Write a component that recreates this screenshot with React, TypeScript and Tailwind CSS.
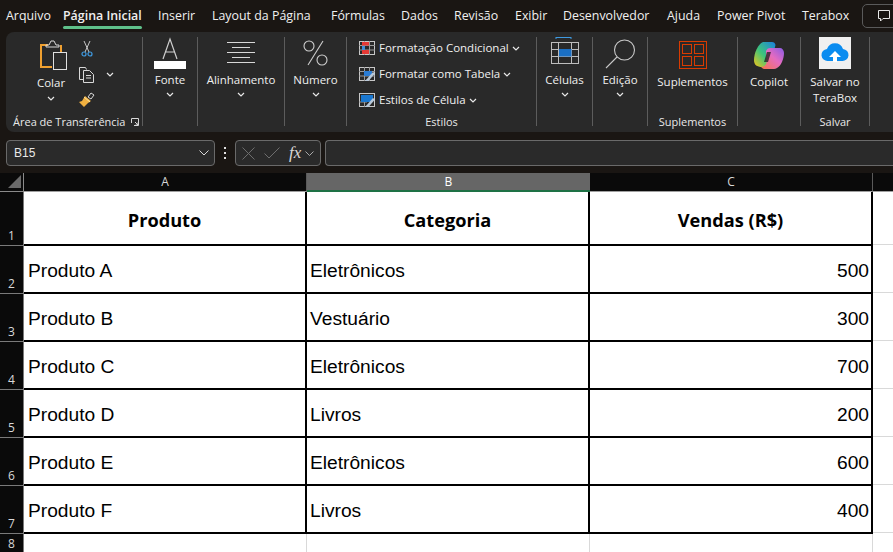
import React, { FC, ReactNode } from "react";

const tabs = [
    { label: "Arquivo", w: "w-[57px]" },
    { label: "Página Inicial", w: "w-[95px]", active: true },
    { label: "Inserir", w: "w-[54px]" },
    { label: "Layout da Página", w: "w-[119px]" },
    { label: "Fórmulas", w: "w-[70px]" },
    { label: "Dados", w: "w-[53px]" },
    { label: "Revisão", w: "w-[61px]" },
    { label: "Exibir", w: "w-[48px]" },
    { label: "Desenvolvedor", w: "w-[104px]" },
    { label: "Ajuda", w: "w-[50px]" },
    { label: "Power Pivot", w: "w-[85px]" },
    { label: "Terabox", w: "w-[60px]" },
];

const rows = [
    ["Produto A", "Eletrônicos", "500"],
    ["Produto B", "Vestuário", "300"],
    ["Produto C", "Eletrônicos", "700"],
    ["Produto D", "Livros", "200"],
    ["Produto E", "Eletrônicos", "600"],
    ["Produto F", "Livros", "400"],
];

const Chevron: FC<{ className?: string }> = ({ className = "" }) => (
    <svg width="8" height="5" viewBox="0 0 8 5" fill="none" stroke="#e8e8e8" strokeWidth="1.2" className={className}>
        <path d="M1 1l3 3 3-3" />
    </svg>
);

const Group: FC<{ w: string; label?: string; children: ReactNode }> = ({ w, label, children }) => (
    <div className={`${w} h-full flex shrink-0`}>
        <div className="flex-1 min-w-0 flex flex-col">
            <div className="flex-1 min-h-0 pt-[5px]">{children}</div>
            <div className="h-[20px] leading-[20px] text-center text-[11px] text-[#e8e8e8] whitespace-nowrap">{label}</div>
        </div>
        <div className="w-px h-[89px] mt-[5px] bg-[#5c5c5c]" />
    </div>
);

const BigButton: FC<{ icon: ReactNode; label: string }> = ({ icon, label }) => (
    <div className="flex flex-col items-center">
        <div className="h-[35px] flex items-start justify-center">{icon}</div>
        <div className="h-[16px] leading-[16px] whitespace-nowrap">{label}</div>
        <Chevron className="mt-[4px]" />
    </div>
);

const TallButton: FC<{ icon: ReactNode; lines: string[] }> = ({ icon, lines }) => (
    <div className="flex flex-col items-center">
        <div className="h-[37px] flex items-start justify-center">{icon}</div>
        {lines.map((l) => (
            <div key={l} className="h-[16px] leading-[16px] whitespace-nowrap">{l}</div>
        ))}
    </div>
);

const PasteIcon = () => (
    <svg width="28" height="31" viewBox="0 0 28 31" fill="none" className="ml-[5px]">
        <path d="M8 5H1v22h11" stroke="#f0a030" strokeWidth="2" />
        <path d="M6 7V5h3l2-4h3l2 4h3v2z" stroke="#d8d8d8" strokeWidth="1" />
        <path d="M21 5v7" stroke="#f0a030" strokeWidth="2" />
        <rect x="13.5" y="12.5" width="13" height="17" stroke="#e0e0e0" fill="#2b2b2b" />
    </svg>
);

const ScissorsIcon = () => (
    <svg width="12" height="17" viewBox="0 0 12 17" fill="none">
        <path d="M3 1l5 11M9 1L4 12" stroke="#c8c8c8" />
        <circle cx="3" cy="14" r="2" stroke="#3f9ae0" strokeWidth="1.2" />
        <circle cx="9" cy="14" r="2" stroke="#3f9ae0" strokeWidth="1.2" />
    </svg>
);

const CopyIcon = () => (
    <svg width="17" height="17" viewBox="0 0 17 17" fill="none" stroke="#d8d8d8">
        <path d="M5.5 13.5h-4v-12h6l1 2" />
        <path d="M5.5 4.5h6l4 4v8h-10z" fill="#2b2b2b" />
        <path d="M8 9.5h5M8 12h5" />
    </svg>
);

const BrushIcon = () => (
    <svg width="17" height="16" viewBox="0 0 17 16" fill="none">
        <path d="M10 5l3-4 3 2-3 4z" stroke="#d8d8d8" />
        <path d="M7 4l6 5-3 2-4 4-5-5 3-1z" fill="#f0b040" />
        <path d="M6 5l6 5" stroke="#f8e0a0" />
    </svg>
);

const FontIcon = () => (
    <svg width="32" height="32" viewBox="0 0 32 32" fill="none">
        <path d="M9 22L16 2l7 20M11 15h10" stroke="#cfcfcf" strokeWidth="1.2" />
        <rect y="24" width="32" height="8" fill="#ffffff" />
    </svg>
);

const AlignIcon = () => (
    <svg width="28" height="22" viewBox="0 0 28 22" fill="none" stroke="#d8d8d8" className="mt-[5px]">
        <path d="M0 .5h28M5 5.5h18M0 10.5h28M5 15.5h18M0 20.5h28" />
    </svg>
);

const PercentIcon = () => (
    <svg width="25" height="26" viewBox="0 0 25 26" fill="none" stroke="#cfcfcf" strokeWidth="1.1" className="mt-[3px]">
        <ellipse cx="6" cy="6" rx="5" ry="5" />
        <ellipse cx="19" cy="20" rx="5" ry="5" />
        <path d="M20 1L5 25" />
    </svg>
);

const CondIcon = () => (
    <svg width="16" height="14" viewBox="0 0 16 14" fill="none">
        <rect x=".5" y=".5" width="15" height="13" stroke="#c8c8c8" />
        <path d="M5.5 0v14M10.5 0v14M0 4.5h16M0 9h16" stroke="#9a9a9a" />
        <rect x="3" y="1" width="7" height="3.5" fill="#e53935" />
        <rect x="3" y="9" width="7" height="4" fill="#e53935" />
        <rect x="3" y="5" width="3" height="4" fill="#3f8ed8" />
    </svg>
);

const TableIcon = () => (
    <svg width="16" height="14" viewBox="0 0 16 14" fill="none">
        <rect x=".5" y=".5" width="15" height="13" stroke="#c8c8c8" />
        <path d="M5.5 0v14M10.5 0v14M0 4.5h16M0 9h16" stroke="#9a9a9a" />
        <rect x="5" y="4" width="8" height="5" fill="#2b7cd3" />
        <path d="M6 14l8-9 2 1.500-7 8z" fill="#b8c8d8" />
    </svg>
);

const StyleIcon = () => (
    <svg width="16" height="14" viewBox="0 0 16 14" fill="none">
        <rect x=".5" y=".5" width="15" height="13" stroke="#c8c8c8" />
        <path d="M5.5 9v5M0 9h8" stroke="#9a9a9a" />
        <rect x="2" y="2" width="12" height="7" fill="#1b78d0" />
        <path d="M6 14l8-9 2 1.500-7 8z" fill="#b8c8d8" />
    </svg>
);

const CellsIcon = () => (
    <svg width="28" height="28" viewBox="0 0 28 28" fill="none">
        <path d="M5 .5h15M5 0v2M20 0v2" stroke="#3f9ae0" />
        <rect x=".5" y="5.500" width="27" height="21" stroke="#bdbdbd" />
        <path d="M7.500 5v22M20.500 5v22M0 12.500h28M0 19.500h28" stroke="#bdbdbd" />
        <rect x="8" y="12" width="12.500" height="7.500" fill="#1a6fc4" />
    </svg>
);

const SearchIcon = () => (
    <svg width="31" height="30" viewBox="0 0 31 30" fill="none" stroke="#c8c8c8" strokeWidth="1.1" className="mt-[2px]">
        <circle cx="19.500" cy="11" r="10" />
        <path d="M12 18L1 29" />
    </svg>
);

const AddinIcon = () => (
    <svg width="28" height="28" viewBox="0 0 28 28" fill="none" stroke="#d83b01" className="mt-[4px]">
        <rect x=".5" y=".5" width="27" height="27" />
        <rect x="3.500" y="3.500" width="9" height="9" />
        <rect x="15.500" y="3.500" width="9" height="9" />
        <rect x="3.500" y="15.500" width="9" height="9" />
        <rect x="15.500" y="15.500" width="9" height="9" />
    </svg>
);

const CopilotIcon = () => (
    <svg width="30" height="28" viewBox="0 0 30 28" fill="none" className="mt-[4px]">
        <defs>
            <linearGradient id="cpA" x1="0" y1="1" x2="1" y2="0">
                <stop offset="0" stopColor="#f5c518" />
                <stop offset=".45" stopColor="#3fc47a" />
                <stop offset="1" stopColor="#1a7fe0" />
            </linearGradient>
            <linearGradient id="cpB" x1="0" y1="1" x2="1" y2="0">
                <stop offset="0" stopColor="#f7754a" />
                <stop offset=".55" stopColor="#e56bc0" />
                <stop offset="1" stopColor="#8a5ce6" />
            </linearGradient>
        </defs>
        <path d="M9 1h9c2 0 3 1 3.500 3L17 22c-.5 2-2 4-5 4H8C3 26 0 24 0 19 0 12 4 3 9 1z" fill="url(#cpA)" />
        <path d="M12 10c1-2 2-3 4-3h10c2 0 4 2 4 5 0 6-3 13-7 15-1 .5-2 1-3 1h-9c-2 0-3-1-4-2 3 0 5-2 5.500-4z" fill="url(#cpB)" />
        <path d="M13 11h4l-3 10h-4z" fill="#1d1d1d" opacity=".75" />
    </svg>
);

const TeraBoxIcon = () => (
    <svg width="32" height="32" viewBox="0 0 32 32" className="bg-[#f0f0f0]">
        <path d="M9 24a6 6 0 0 1-1-12 8.500 8.500 0 0 1 16 0 6 6 0 0 1-1 12z" fill="#0a8cf0" />
        <path d="M16 14l-6 6h4v5h4v-5h4z" fill="#ffffff" />
    </svg>
);

const StyleRow: FC<{ icon: ReactNode; label: string }> = ({ icon, label }) => (
    <div className="h-[26px] flex items-center">
        <div className="w-[20px] flex">{icon}</div>
        <span className="whitespace-nowrap">{label}</span>
        <Chevron className="ml-[3px]" />
    </div>
);

const Ribbon = () => (
    <div className="h-[100px] ml-[6px] flex bg-[#292929] rounded-l-[8px] text-[11.5px] text-[#f0f0f0] shrink-0">
        <div className="w-[137px] h-full flex shrink-0">
            <div className="flex-1 min-w-0 flex flex-col">
                <div className="flex-1 min-h-0 pt-[8px] flex">
                    <div className="w-[50px] ml-[20px] flex flex-col items-center">
                        <PasteIcon />
                        <div className="h-[16px] leading-[16px] mt-[4px]">Colar</div>
                        <Chevron className="mt-[5px]" />
                    </div>
                    <div className="flex flex-col ml-[2px]">
                        <div className="ml-[3px]"><ScissorsIcon /></div>
                        <div className="flex items-center mt-[9px]">
                            <CopyIcon />
                            <Chevron className="ml-[11px] -mt-[1px]" />
                        </div>
                        <div className="mt-[9px]"><BrushIcon /></div>
                    </div>
                </div>
                <div className="h-[20px] flex items-center pl-[7px] text-[11px] text-[#e8e8e8]">
                    <span className="w-[111px] whitespace-nowrap">Área de Transferência</span>
                    <svg width="8" height="8" viewBox="0 0 8 8" fill="none" stroke="#d8d8d8" className="ml-[7px]">
                        <path d="M.5 5V.5h7v7H3M4 4l3 3M7 4.500V7H4.500" />
                    </svg>
                </div>
            </div>
            <div className="w-px h-[89px] mt-[5px] bg-[#5c5c5c]" />
        </div>
        <Group w="w-[55px]">
            <BigButton icon={<FontIcon />} label="Fonte" />
        </Group>
        <Group w="w-[87px]">
            <BigButton icon={<AlignIcon />} label="Alinhamento" />
        </Group>
        <Group w="w-[62px]">
            <BigButton icon={<PercentIcon />} label="Número" />
        </Group>
        <Group w="w-[190px]" label="Estilos">
            <div className="pl-[12px] -mt-[2px]">
                <StyleRow icon={<CondIcon />} label="Formatação Condicional" />
                <StyleRow icon={<TableIcon />} label="Formatar como Tabela" />
                <StyleRow icon={<StyleIcon />} label="Estilos de Célula" />
            </div>
        </Group>
        <Group w="w-[56px]">
            <BigButton icon={<CellsIcon />} label="Células" />
        </Group>
        <Group w="w-[55px]">
            <BigButton icon={<SearchIcon />} label="Edição" />
        </Group>
        <Group w="w-[90px]" label="Suplementos">
            <TallButton icon={<AddinIcon />} lines={["Suplementos"]} />
        </Group>
        <Group w="w-[63px]">
            <TallButton icon={<CopilotIcon />} lines={["Copilot"]} />
        </Group>
        <Group w="w-[69px]" label="Salvar">
            <TallButton icon={<TeraBoxIcon />} lines={["Salvar no", "TeraBox"]} />
        </Group>
    </div>
);

const FormulaBar = () => (
    <div className="h-[26px] mt-[8px] ml-[6px] flex items-stretch shrink-0 text-[#e8e8e8]">
        <div className="w-[209px] flex items-center justify-between pl-[7px] pr-[5px] bg-[#2a2a2a] border border-[#6a6a6a] rounded-[4px] text-[12px]">
            <span className="[font-family:'Liberation_Sans',sans-serif]">B15</span>
            <svg width="10" height="6" viewBox="0 0 10 6" fill="none" stroke="#d8d8d8"><path d="M.5.5L5 5 9.500.5" /></svg>
        </div>
        <div className="w-[20px] flex flex-col items-center justify-center gap-[3px]">
            <div className="w-[2px] h-[2px] bg-[#e0e0e0]" />
            <div className="w-[2px] h-[2px] bg-[#e0e0e0]" />
            <div className="w-[2px] h-[2px] bg-[#e0e0e0]" />
        </div>
        <div className="w-[86px] flex items-center pl-[6px] bg-[#2a2a2a] border border-[#6a6a6a] rounded-[4px]">
            <svg width="13" height="13" viewBox="0 0 13 13" fill="none" stroke="#6e6e6e"><path d="M.5.5l12 12M12.500.5l-12 12" /></svg>
            <svg width="16" height="12" viewBox="0 0 16 12" fill="none" stroke="#6e6e6e" className="ml-[9px]"><path d="M.5 6.500L5 11 15.500.5" /></svg>
            <span className="ml-[9px] text-[17px] italic [font-family:'Liberation_Serif',serif] text-[#d8d8d8]">fx</span>
            <svg width="9" height="5" viewBox="0 0 9 5" fill="none" stroke="#a8a8a8" className="ml-[4px]"><path d="M.5.500L4.500 4.500 8.500.5" /></svg>
        </div>
        <div className="flex-1 ml-[4px] bg-[#2a2a2a] border border-[#6a6a6a] border-r-0 rounded-l-[4px]" />
    </div>
);

const ColHead: FC<{ label: string; active?: boolean }> = ({ label, active }) => (
    <div
        className={`flex items-center justify-center text-[12px] border-b ${
            active
                ? "bg-[#666666] text-white border-b-2 border-[#1e7145]"
                : "bg-[#0a0a0a] text-[#d8d8d8] border-[#a0a0a0] border-r border-r-[#5a5a5a]"
        }`}
    >
        {label}
    </div>
);

const RowHead: FC<{ n: number }> = ({ n }) => (
    <div className="flex items-end justify-center pb-px text-[12px] leading-[16px] text-[#d8d8d8] bg-[#0a0a0a] border-r border-b border-[#7a7a7a] [font-family:'Open_Sans',sans-serif]">
        {n}
    </div>
);

const Sheet = () => (
    <div className="mt-[7px] flex-1 min-h-0 grid grid-cols-[24px_283px_283px_283px_20px] grid-rows-[19px_54px_repeat(6,48px)_20px] bg-white [font-family:'Liberation_Sans',sans-serif]">
        <div className="bg-[#0a0a0a] border-r border-b border-[#8a8a8a] flex items-end justify-end p-[3px] pr-[2px]">
            <div className="w-[13px] h-[13px] bg-[#6a6a6a] [clip-path:polygon(100%_0,100%_100%,0_100%)]" />
        </div>
        <div className="contents [font-family:'Open_Sans',sans-serif]">
            <ColHead label="A" />
            <ColHead label="B" active />
            <ColHead label="C" />
            <div className="bg-[#0a0a0a] border-b border-[#a0a0a0]" />
        </div>

        <RowHead n={1} />
        {["Produto", "Categoria", "Vendas (R$)"].map((h) => (
            <div
                key={h}
                className="flex items-center justify-center pt-[5px] text-[18.2px] font-bold text-black border-r-2 border-b-2 border-black [font-family:'Open_Sans',sans-serif]"
            >
                {h}
            </div>
        ))}
        <div className="border-b border-[#d9d9d9] mb-px" />

        {rows.map((row, i) => (
            <React.Fragment key={row[0]}>
                <RowHead n={i + 2} />
                <div className="flex items-center pl-[4px] pt-[5px] text-[19.2px] text-black border-r-2 border-b-2 border-black">{row[0]}</div>
                <div className="flex items-center pl-[3px] pt-[5px] text-[19.2px] text-black border-r-2 border-b-2 border-black">{row[1]}</div>
                <div className="flex items-center justify-end pr-[2px] pt-[5px] text-[19.2px] text-black border-r-2 border-b-2 border-black">{row[2]}</div>
                <div className="border-b border-[#d9d9d9] mb-px" />
            </React.Fragment>
        ))}

        <RowHead n={8} />
        <div className="border-r border-[#d9d9d9]" />
        <div className="border-r border-[#d9d9d9]" />
        <div className="border-r border-[#d9d9d9]" />
        <div />
    </div>
);

export default function App() {
    return (
        <div className="w-[893px] h-[552px] overflow-hidden flex flex-col bg-[#1a1613] [font-family:'Open_Sans',sans-serif]">
            <div className="h-[32px] pl-[6px] flex items-center shrink-0 text-[12.4px] text-[#f0f0f0]">
                {tabs.map((t) => (
                    <div key={t.label} className={`${t.w} shrink-0 h-full flex items-center relative whitespace-nowrap`}>
                        <span className={t.active ? "font-semibold" : ""}>{t.label}</span>
                        {t.active && <div className="absolute left-0 top-[26px] w-[79px] h-[3px] rounded-[2px] bg-[#5fc08a]" />}
                    </div>
                ))}
                <div className="w-[40px] h-[24px] -mt-[1px] shrink-0 flex items-center pl-[15px] border border-[#5a5a5a] rounded-[5px]">
                    <svg width="12" height="12" viewBox="0 0 12 12" fill="none" stroke="#e8e8e8"><path d="M.5.5h11v8H5L2.500 11V8.500h-2z" /></svg>
                </div>
            </div>
            <Ribbon />
            <FormulaBar />
            <Sheet />
        </div>
    );
}
